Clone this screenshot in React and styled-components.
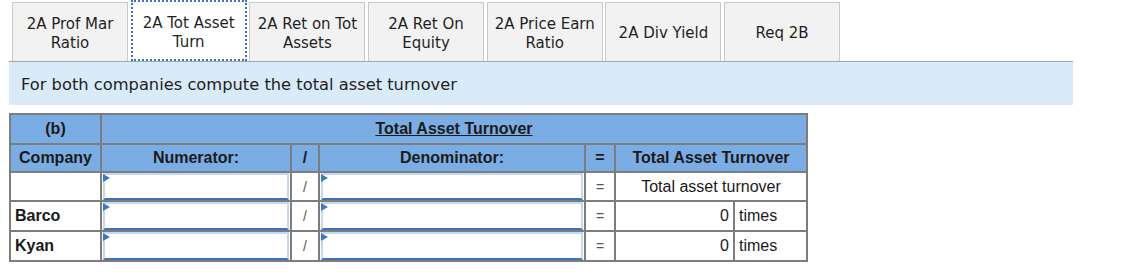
import styled, { createGlobalStyle } from 'styled-components';

const GlobalStyle = createGlobalStyle`
  body {
    margin: 0;
    background: #ffffff;
  }
`;

const Page = styled.div`
  width: 1135px;
  height: 272px;
  padding: 0 0 0 9px;
  box-sizing: border-box;
`;

const TabStrip = styled.div`
  display: flex;
  align-items: flex-end;
  gap: 2.7px;
  width: 1064px;
  height: 62px;
  padding-left: 3px;
  box-sizing: border-box;
  border-bottom: 1px solid #a6a6a6;
`;

const Tab = styled.div`
  display: flex;
  align-items: center;
  justify-content: center;
  width: 116px;
  height: ${(p) => (p.$active ? '61px' : '59px')};
  padding-top: ${(p) => (p.$active ? '4px' : '3px')};
  box-sizing: border-box;
  border: ${(p) => (p.$active ? '2px dotted #3c72bb' : '1px solid #c9c9c9')};
  border-bottom: ${(p) => (p.$active ? '2px dotted #3c72bb' : 'none')};
  background: ${(p) => (p.$active ? '#ffffff' : '#f2f2f2')};
  font-family: 'DejaVu Sans', Verdana, sans-serif;
  font-size: 15px;
  line-height: 19px;
  color: #1f1f1f;
  text-align: center;
`;

const InfoBar = styled.div`
  width: 1064px;
  height: 43px;
  box-sizing: border-box;
  padding: 13px 0 0 12px;
  background: #d9eaf8;
  font-family: 'DejaVu Sans', Verdana, sans-serif;
  font-size: 16.3px;
  color: #1f1f1f;
`;

const Grid = styled.table`
  margin-top: 8px;
  width: 797px;
  table-layout: fixed;
  border-collapse: separate;
  border-spacing: 0;
  border: 1px solid #7d7d7d;
  font-family: 'Liberation Sans', Arial, sans-serif;
  font-size: 16px;
  color: #1a1a1a;
`;

const HeadCell = styled.th`
  height: ${(p) => p.$h || 26}px;
  padding: 0 4px;
  background: #7aade4;
  border: 1px solid #7d7d7d;
  font-weight: 700;
  text-align: center;
  text-decoration: ${(p) => (p.$underline ? 'underline' : 'none')};
`;

const Cell = styled.td`
  height: ${(p) => p.$h || 27}px;
  padding: 0 4px;
  border: 1px solid #7d7d7d;
  text-align: ${(p) => p.$align || 'left'};
  font-weight: ${(p) => (p.$bold ? 700 : 400)};
  background: #ffffff;
`;

const InputCell = styled.td`
  position: relative;
  padding: 0;
  border: 1px solid #7d7d7d;
`;

const Field = styled.div`
  height: ${(p) => p.$h}px;
  box-sizing: border-box;
  margin: 0 1px;
  background: #ffffff;
  border: 2px solid #c3d8f1;
  border-bottom: 2px solid #3d72ba;
`;

const Flag = styled.span`
  position: absolute;
  left: 1px;
  top: 1px;
  width: 0;
  height: 0;
  border-top: 4px solid transparent;
  border-bottom: 4px solid transparent;
  border-left: 7px solid #3d78c4;
`;

const Sep = styled.span`
  color: #555555;
  font-size: 14px;
`;

const tabLines = [
  ['2A Prof Mar', 'Ratio'],
  ['2A Tot Asset', 'Turn'],
  ['2A Ret on Tot', 'Assets'],
  ['2A Ret On', 'Equity'],
  ['2A Price Earn', 'Ratio'],
  ['2A Div Yield'],
  ['Req 2B'],
];

const rows = [
  { name: '', result: null, h: 27 },
  { name: 'Barco', result: '0', h: 28 },
  { name: 'Kyan', result: '0', h: 28 },
];

function InputBox({ h }) {
  return (
    <InputCell>
      <Field $h={h} />
      <Flag />
    </InputCell>
  );
}

export default function App() {
  return (
    <>
      <GlobalStyle />
      <Page>
        <TabStrip>
          {tabLines.map((lines, i) => (
            <Tab key={lines.join(' ')} $active={i === 1}>
              <div>
                {lines.map((l) => (
                  <div key={l}>{l}</div>
                ))}
              </div>
            </Tab>
          ))}
        </TabStrip>
        <InfoBar>For both companies compute the total asset turnover</InfoBar>
        <Grid>
          <colgroup>
            <col style={{ width: 91 }} />
            <col style={{ width: 190 }} />
            <col style={{ width: 28 }} />
            <col style={{ width: 266 }} />
            <col style={{ width: 30 }} />
            <col style={{ width: 119 }} />
            <col style={{ width: 73 }} />
          </colgroup>
          <thead>
            <tr>
              <HeadCell $h={28}>(b)</HeadCell>
              <HeadCell colSpan={6} $underline>
                Total Asset Turnover
              </HeadCell>
            </tr>
            <tr>
              <HeadCell $h={26}>Company</HeadCell>
              <HeadCell>Numerator:</HeadCell>
              <HeadCell>/</HeadCell>
              <HeadCell>Denominator:</HeadCell>
              <HeadCell>=</HeadCell>
              <HeadCell colSpan={2}>Total Asset Turnover</HeadCell>
            </tr>
          </thead>
          <tbody>
            {rows.map((r, i) => (
              <tr key={i}>
                <Cell $bold $h={r.h}>{r.name}</Cell>
                <InputBox h={r.h} />
                <Cell $align="center">
                  <Sep>/</Sep>
                </Cell>
                <InputBox h={r.h} />
                <Cell $align="center">
                  <Sep>=</Sep>
                </Cell>
                {r.result === null ? (
                  <Cell colSpan={2} $align="center">
                    Total asset turnover
                  </Cell>
                ) : (
                  <>
                    <Cell $align="right">{r.result}</Cell>
                    <Cell>times</Cell>
                  </>
                )}
              </tr>
            ))}
          </tbody>
        </Grid>
      </Page>
    </>
  );
}
